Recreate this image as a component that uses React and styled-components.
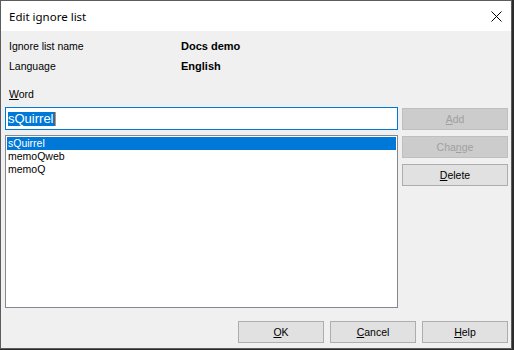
import styled, { createGlobalStyle } from "styled-components";

const Global = createGlobalStyle`
  html, body {
    margin: 0;
    padding: 0;
    background: #2b2b2b;
  }
  * {
    box-sizing: border-box;
  }
`;

const Janela = styled.div`
  width: 512px;
  height: 349px;
  border: 1px solid #5c5c5c;
  background: #f0f0f0;
  display: flex;
  flex-direction: column;
  font-family: "Liberation Sans", Arial, sans-serif;
  font-size: 10.5px;
  color: #000;
`;

const BarraTitulo = styled.div`
  height: 30px;
  background: #fff;
  display: flex;
  align-items: center;
  justify-content: space-between;
  padding: 0 8px 0 8px;
  font-family: "Noto Sans", sans-serif;
  font-size: 11.5px;
  flex-shrink: 0;
`;

const Fechar = styled.button`
  border: none;
  background: none;
  padding: 0;
  width: 12px;
  height: 12px;
  display: flex;
  align-items: center;
  justify-content: center;
  margin-right: 1px;
`;

const Corpo = styled.div`
  flex: 1;
  display: flex;
  flex-direction: column;
  padding: 5px 3px 5px 4px;
`;

const Info = styled.div`
  display: grid;
  grid-template-columns: 172px 1fr;
  grid-auto-rows: 20px;
  line-height: 20px;
  padding-left: 4px;
`;

const Valor = styled.span`
  font-weight: bold;
  font-size: 11px;
`;

const Rotulo = styled.div`
  margin-top: 11px;
  line-height: 14px;
  height: 14px;
  padding-left: 4px;
`;

const Principal = styled.div`
  margin-top: 6px;
  display: flex;
  gap: 4px;
`;

const Esquerda = styled.div`
  width: 393px;
  display: flex;
  flex-direction: column;
  gap: 5px;
`;

const Entrada = styled.div`
  height: 23px;
  border: 1px solid #0078d7;
  background: #fff;
  display: flex;
  align-items: center;
  padding-left: 2px;
  font-size: 13px;
`;

const Selecao = styled.span`
  background: #0078d7;
  color: #fff;
  line-height: 14px;
  height: 14px;
  padding-right: 1px;
  border-right: 1px solid #f7862a;
`;

const Lista = styled.div`
  height: 173px;
  border: 1px solid #828790;
  background: #fff;
  padding: 1px 1px 0 1px;
`;

const Item = styled.div`
  height: 13px;
  line-height: 13px;
  padding-left: 1px;
  background: ${(p) => (p.$ativo ? "#0078d7" : "transparent")};
  color: ${(p) => (p.$ativo ? "#fff" : "#000")};
`;

const Direita = styled.div`
  width: 106px;
  padding-top: 1px;
  display: flex;
  flex-direction: column;
  gap: 6px;
`;

const Botao = styled.button`
  height: 22px;
  width: ${(p) => p.$largura || "100%"};
  padding: 0;
  font-family: "Liberation Sans", Arial, sans-serif;
  font-size: 10.5px;
  background: ${(p) => (p.disabled ? "#cccccc" : "#e1e1e1")};
  border: 1px solid ${(p) => (p.disabled ? "#bfbfbf" : "#adadad")};
  color: ${(p) => (p.disabled ? "#a0a0a0" : "#000")};
  border-radius: 0;
`;

const Rodape = styled.div`
  margin-top: 13px;
  display: flex;
  justify-content: flex-end;
  gap: 6px;
`;

const U = styled.span`
  text-decoration: underline;
`;

const palavras = ["sQuirrel", "memoQweb", "memoQ"];

export default function App() {
  return (
    <>
      <Global />
      <Janela>
        <BarraTitulo>
          <span>Edit ignore list</span>
          <Fechar>
            <svg width="11" height="11" viewBox="0 0 11 11">
              <path d="M0.5 0.5 L10.5 10.5 M10.5 0.5 L0.5 10.5" stroke="#000" strokeWidth="1" />
            </svg>
          </Fechar>
        </BarraTitulo>
        <Corpo>
          <Info>
            <span>Ignore list name</span>
            <Valor>Docs demo</Valor>
            <span>Language</span>
            <Valor>English</Valor>
          </Info>
          <Rotulo>
            <U>W</U>ord
          </Rotulo>
          <Principal>
            <Esquerda>
              <Entrada>
                <Selecao>sQuirrel</Selecao>
              </Entrada>
              <Lista>
                {palavras.map((p, i) => (
                  <Item key={p} $ativo={i === 0}>
                    {p}
                  </Item>
                ))}
              </Lista>
            </Esquerda>
            <Direita>
              <Botao disabled>
                <U>A</U>dd
              </Botao>
              <Botao disabled>
                Cha<U>n</U>ge
              </Botao>
              <Botao>
                <U>D</U>elete
              </Botao>
            </Direita>
          </Principal>
          <Rodape>
            <Botao $largura="86px">
              <U>O</U>K
            </Botao>
            <Botao $largura="86px">
              <U>C</U>ancel
            </Botao>
            <Botao $largura="86px">
              <U>H</U>elp
            </Botao>
          </Rodape>
        </Corpo>
      </Janela>
    </>
  );
}
